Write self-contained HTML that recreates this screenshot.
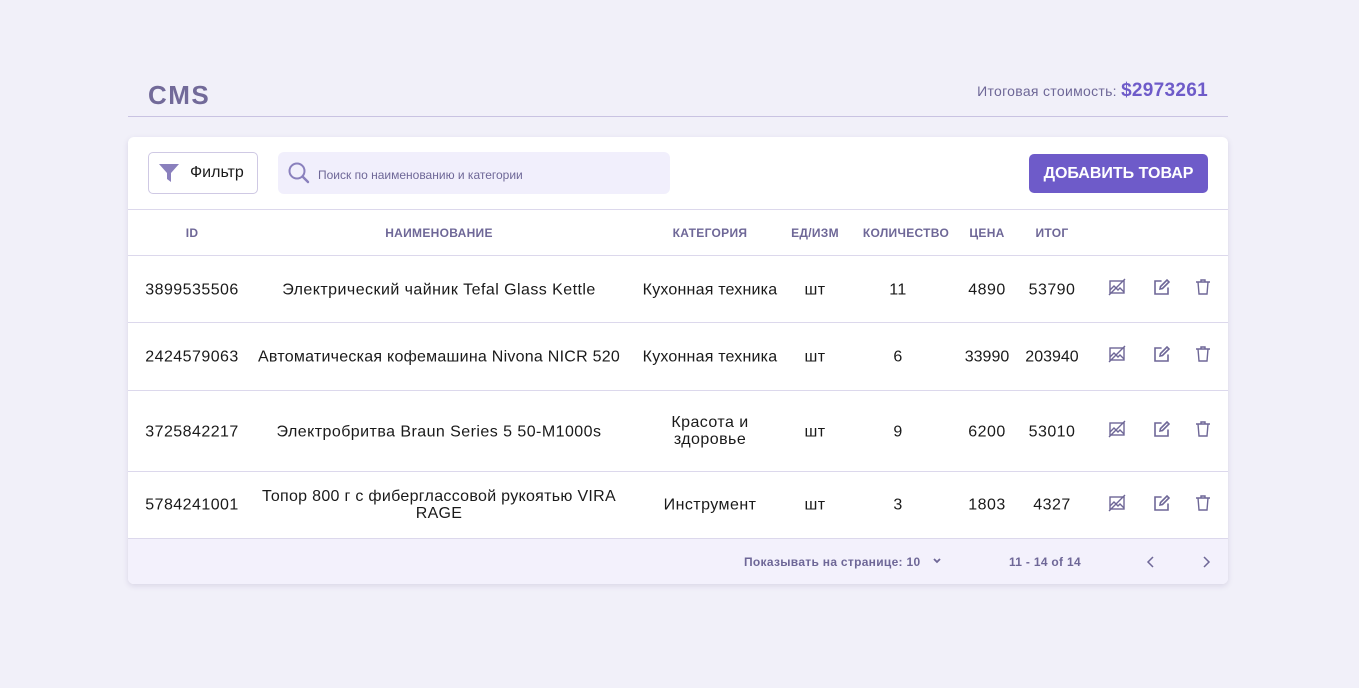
<!DOCTYPE html>
<html><head><meta charset="utf-8"><style>
*{box-sizing:border-box;margin:0;padding:0}
body{width:1359px;height:688px;background:#f1f0f9;font-family:"Liberation Sans",sans-serif;position:relative;overflow:hidden;color:#1a1a1a}
.a{position:absolute}
.c{position:absolute;transform:translate(-50%,-50%);text-align:center;font-size:16px;line-height:17px;letter-spacing:.45px}
.h{position:absolute;transform:translate(-50%,-50%);font-size:12px;font-weight:bold;color:#6e6797;letter-spacing:.3px;white-space:nowrap}
.line{position:absolute;left:128px;width:1100px;height:1px;background:#dcd8ec}
svg{position:absolute}
</style></head><body>
<div class="a" style="left:148px;top:80px;font-size:26px;font-weight:bold;color:#726a99;letter-spacing:1.5px">CMS</div>
<div class="a" style="right:151px;top:80px;font-size:14px;color:#6e6797;letter-spacing:.3px">Итоговая стоимость: <b style="font-size:19px;color:#6e5bc9">$2973261</b></div>
<div class="a" style="left:128px;top:116px;width:1100px;height:1px;background:#c9c3e2"></div>
<div class="a" style="left:128px;top:137px;width:1100px;height:447px;background:#fff;border-radius:6px;box-shadow:0 2px 6px rgba(80,70,130,.15);overflow:hidden">
<div class="a" style="left:0;top:401px;width:1100px;height:46px;background:#f3f1fc"></div>
</div>
<div class="a" style="left:148px;top:152px;width:110px;height:42px;border:1px solid #cfc9e4;border-radius:5px;font-size:16px;padding:11px 0 0 41px">Фильтр</div>
<svg style="left:158px;top:163px" width="22" height="20" viewBox="0 0 22 20"><path d="M1 1H21L13 10V19L9 16V10Z" fill="#8a80bd"/></svg>
<div class="a" style="left:278px;top:152px;width:392px;height:42px;background:#f1effc;border-radius:6px;font-size:12px;color:#6e6797;padding:16px 0 0 40px">Поиск по наименованию и категории</div>
<svg style="left:287px;top:161px" width="24" height="24" viewBox="0 0 24 24"><circle cx="10" cy="10" r="7.5" fill="none" stroke="#8a80bd" stroke-width="2"/><path d="M15.5 15.5L21 21" stroke="#8a80bd" stroke-width="2.4" stroke-linecap="round"/></svg>
<div class="a" style="left:1029px;top:154px;width:179px;height:39px;background:#6e5bc9;border-radius:5px;color:#fff;font-weight:bold;font-size:16px;text-align:center;line-height:39px">ДОБАВИТЬ ТОВАР</div>
<div class="line" style="top:209px"></div>
<div class="line" style="top:255px"></div>
<div class="line" style="top:322px"></div>
<div class="line" style="top:390px"></div>
<div class="line" style="top:471px"></div>
<div class="line" style="top:538px"></div>
<div class="h" style="left:192px;top:233px">ID</div>
<div class="h" style="left:439px;top:233px">НАИМЕНОВАНИЕ</div>
<div class="h" style="left:710px;top:233px">КАТЕГОРИЯ</div>
<div class="h" style="left:815px;top:233px">ЕД/ИЗМ</div>
<div class="h" style="left:906px;top:233px">КОЛИЧЕСТВО</div>
<div class="h" style="left:987px;top:233px">ЦЕНА</div>
<div class="h" style="left:1052px;top:233px">ИТОГ</div>

<div class="c" style="left:192px;top:290px">3899535506</div>
<div class="c" style="left:439px;top:290px;white-space:nowrap">Электрический чайник Tefal Glass Kettle</div>
<div class="c" style="left:710px;top:290px;white-space:nowrap;letter-spacing:.2px">Кухонная техника</div>
<div class="c" style="left:815px;top:290px">шт</div>
<div class="c" style="left:898px;top:290px">11</div>
<div class="c" style="left:987px;top:290px">4890</div>
<div class="c" style="left:1052px;top:290px">53790</div>

<div class="c" style="left:192px;top:357px">2424579063</div>
<div class="c" style="left:439px;top:357px;white-space:nowrap;letter-spacing:.25px">Автоматическая кофемашина Nivona NICR 520</div>
<div class="c" style="left:710px;top:357px;white-space:nowrap;letter-spacing:.2px">Кухонная техника</div>
<div class="c" style="left:815px;top:357px">шт</div>
<div class="c" style="left:898px;top:357px">6</div>
<div class="c" style="left:987px;top:357px;letter-spacing:0">33990</div>
<div class="c" style="left:1052px;top:357px;letter-spacing:0">203940</div>

<div class="c" style="left:192px;top:432px">3725842217</div>
<div class="c" style="left:439px;top:432px;white-space:nowrap">Электробритва Braun Series 5 50-M1000s</div>
<div class="c" style="left:710px;top:431px;width:100px">Красота и здоровье</div>
<div class="c" style="left:815px;top:432px">шт</div>
<div class="c" style="left:898px;top:432px">9</div>
<div class="c" style="left:987px;top:432px">6200</div>
<div class="c" style="left:1052px;top:432px">53010</div>

<div class="c" style="left:192px;top:505px">5784241001</div>
<div class="c" style="left:439px;top:505px;width:380px;letter-spacing:.3px">Топор 800 г с фиберглассовой рукоятью VIRA RAGE</div>
<div class="c" style="left:710px;top:505px">Инструмент</div>
<div class="c" style="left:815px;top:505px">шт</div>
<div class="c" style="left:898px;top:505px">3</div>
<div class="c" style="left:987px;top:505px">1803</div>
<div class="c" style="left:1052px;top:505px">4327</div>

<svg width="0" height="0" style="position:absolute"><defs>
<g id="img" fill="none" stroke="#6e6797" stroke-width="1.4"><rect x="2" y="3" width="14" height="12"/><path d="M2 12L6 8L10 12L12 10L16 14M1 17L17 1"/></g>
<g id="ed" fill="none" stroke="#6e6797" stroke-width="1.6" stroke-linecap="round"><path d="M9 3H3V16H16V10"/><path d="M8 11L8.5 8.5L15 2L17 4L10.5 10.5Z"/></g>
<g id="tr" fill="none" stroke="#6e6797" stroke-width="1.4"><path d="M2 4H16M7 4V2H11V4M4 4L5 16H13L14 4"/></g>
</defs></svg>
<svg style="left:1108px;top:278px" width="18" height="18"><use href="#img"/></svg>
<svg style="left:1152px;top:278px" width="18" height="18"><use href="#ed"/></svg>
<svg style="left:1194px;top:278px" width="18" height="18"><use href="#tr"/></svg>
<svg style="left:1108px;top:345px" width="18" height="18"><use href="#img"/></svg>
<svg style="left:1152px;top:345px" width="18" height="18"><use href="#ed"/></svg>
<svg style="left:1194px;top:345px" width="18" height="18"><use href="#tr"/></svg>
<svg style="left:1108px;top:420px" width="18" height="18"><use href="#img"/></svg>
<svg style="left:1152px;top:420px" width="18" height="18"><use href="#ed"/></svg>
<svg style="left:1194px;top:420px" width="18" height="18"><use href="#tr"/></svg>
<svg style="left:1108px;top:494px" width="18" height="18"><use href="#img"/></svg>
<svg style="left:1152px;top:494px" width="18" height="18"><use href="#ed"/></svg>
<svg style="left:1194px;top:494px" width="18" height="18"><use href="#tr"/></svg>

<div class="a" style="left:744px;top:555px;font-size:12px;font-weight:bold;color:#6e6797;letter-spacing:.3px">Показывать на странице: 10</div>
<svg style="left:932px;top:556px" width="10" height="10"><path d="M2 3L5 6L8 3" fill="none" stroke="#6e6797" stroke-width="1.8"/></svg>
<div class="a" style="left:1009px;top:555px;font-size:12px;font-weight:bold;color:#6e6797;letter-spacing:.3px">11 - 14 of 14</div>
<svg style="left:1145px;top:555px" width="12" height="14"><path d="M8 2L3 7L8 12" fill="none" stroke="#6e6797" stroke-width="1.5"/></svg>
<svg style="left:1200px;top:555px" width="12" height="14"><path d="M4 2L9 7L4 12" fill="none" stroke="#6e6797" stroke-width="1.5"/></svg>
</body></html>
